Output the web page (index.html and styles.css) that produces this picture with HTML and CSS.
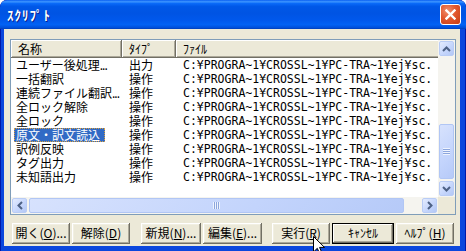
FILE: index.html
```html
<!DOCTYPE html>
<html lang="ja">
<head>
    <meta charset="UTF-8">
    <title>スクリプト</title>
    <link rel="stylesheet" href="styles.css">
</head>
<body>
    <div class="window">
        <div class="titlebar">
            <span class="title">ｽｸﾘﾌﾟﾄ</span>
            <span class="close">
                <svg width="11" height="11" viewBox="0 0 11 11"><path d="M1.5 1.5 L9.5 9.5 M9.5 1.5 L1.5 9.5" stroke="#fff" stroke-width="2.4" stroke-linecap="square"/></svg>
            </span>
        </div>
        <div class="client">
            <div class="listview">
                <div class="lv-body">
                    <div class="lv-head">
                        <div class="hcell col-name">名称</div>
                        <div class="hcell col-type">ﾀｲﾌﾟ</div>
                        <div class="hcell col-file">ﾌｧｲﾙ</div>
                    </div>
                    <div class="row"><div class="c-name"><span>ユーザー後処理<b class="dots">...</b></span></div><div class="c-type">出力</div><div class="c-file">C:¥PROGRA~1¥CROSSL~1¥PC-TRA~1¥ej¥sc.</div></div>
                    <div class="row"><div class="c-name"><span>一括翻訳</span></div><div class="c-type">操作</div><div class="c-file">C:¥PROGRA~1¥CROSSL~1¥PC-TRA~1¥ej¥sc.</div></div>
                    <div class="row"><div class="c-name"><span>連続ファイル翻訳<b class="dots">...</b></span></div><div class="c-type">操作</div><div class="c-file">C:¥PROGRA~1¥CROSSL~1¥PC-TRA~1¥ej¥sc.</div></div>
                    <div class="row"><div class="c-name"><span>全ロック解除</span></div><div class="c-type">操作</div><div class="c-file">C:¥PROGRA~1¥CROSSL~1¥PC-TRA~1¥ej¥sc.</div></div>
                    <div class="row"><div class="c-name"><span>全ロック</span></div><div class="c-type">操作</div><div class="c-file">C:¥PROGRA~1¥CROSSL~1¥PC-TRA~1¥ej¥sc.</div></div>
                    <div class="row selected"><div class="c-name"><span>原文・訳文読込</span></div><div class="c-type">操作</div><div class="c-file">C:¥PROGRA~1¥CROSSL~1¥PC-TRA~1¥ej¥sc.</div></div>
                    <div class="row"><div class="c-name"><span>訳例反映</span></div><div class="c-type">操作</div><div class="c-file">C:¥PROGRA~1¥CROSSL~1¥PC-TRA~1¥ej¥sc.</div></div>
                    <div class="row"><div class="c-name"><span>タグ出力</span></div><div class="c-type">操作</div><div class="c-file">C:¥PROGRA~1¥CROSSL~1¥PC-TRA~1¥ej¥sc.</div></div>
                    <div class="row"><div class="c-name"><span>未知語出力</span></div><div class="c-type">操作</div><div class="c-file">C:¥PROGRA~1¥CROSSL~1¥PC-TRA~1¥ej¥sc.</div></div>
                </div>

                <!-- vertical scrollbar -->
                <div class="vscroll">
                    <div class="sb-btn"><svg width="9" height="6" viewBox="0 0 9 6"><path d="M1 5 L4.5 1.5 L8 5" fill="none" stroke="#4D6185" stroke-width="2"/></svg></div>
                    <div class="vtrack"><div class="thumb vthumb"><i class="grip-h"></i></div></div>
                    <div class="sb-btn"><svg width="9" height="6" viewBox="0 0 9 6"><path d="M1 1 L4.5 4.5 L8 1" fill="none" stroke="#4D6185" stroke-width="2"/></svg></div>
                </div>

                <!-- horizontal scrollbar -->
                <div class="hscroll">
                    <div class="sb-btn"><svg width="6" height="9" viewBox="0 0 6 9"><path d="M5 1 L1.5 4.5 L5 8" fill="none" stroke="#4D6185" stroke-width="2"/></svg></div>
                    <div class="htrack"><div class="thumb hthumb"><i class="grip-v"></i></div></div>
                    <div class="sb-btn"><svg width="6" height="9" viewBox="0 0 6 9"><path d="M1 1 L4.5 4.5 L1 8" fill="none" stroke="#4D6185" stroke-width="2"/></svg></div>
                </div>
                <div class="corner"></div>
            </div>

            <div class="buttons">
                <div class="btn w58">開く(<u>O</u>)...</div>
                <div class="btn w58 ml2">解除(<u>D</u>)</div>
                <div class="btn w60 ml11">新規(<u>N</u>)...</div>
                <div class="btn w59 ml2">編集(<u>E</u>)...</div>
                <div class="btn w58 ml10">実行(<u>R</u>)</div>
                <div class="btn w62 ml2 default">ｷｬﾝｾﾙ</div>
                <div class="btn w58 ml2">ﾍﾙﾌﾟ(<u>H</u>)</div>
            </div>
        </div>

        <svg class="cursor" width="12" height="20" viewBox="0 0 12 20"><path d="M0.5 0.5 L0.5 16 L4.3 12.3 L7 18.5 L9.2 17.5 L6.6 11.4 L11.5 11.4 Z" fill="#fff" stroke="#000" stroke-width="1"/></svg>
    </div>
</body>
</html>
```

FILE: styles.css
```css
html, body {
    margin: 0;
    background: #fff;
}
body {
    width: 466px;
    height: 251px;
    overflow: hidden;
    font-family: "Noto Sans CJK JP", sans-serif;
    font-size: 12px;
    color: #000;
}
.window {
    position: relative;
    width: 466px;
    height: 251px;
    display: flex;
    flex-direction: column;
    background: #0B47DD;
    border-radius: 7px 7px 0 0;
    box-shadow: inset 1px 0 #0019A8, inset -1px 0 #0019A8;
    overflow: hidden;
}
.titlebar {
    height: 29px;
    flex: none;
    display: flex;
    align-items: center;
    padding: 0 5px 0 7px;
    background: linear-gradient(to bottom, #0A5FF2 0%, #3D95FF 6%, #0A6AF8 12%, #0058E8 22%, #0054E3 45%, #0058EC 70%, #0262F4 85%, #0050DB 95%, #003EB8 100%);
    border-radius: 7px 7px 0 0;
}
.title {
    flex: 1;
    color: #fff;
    font-weight: bold;
    font-size: 13px;
    letter-spacing: 1px;
    text-shadow: 1px 1px #0A1E8C;
}
.close {
    width: 19px;
    height: 19px;
    display: flex;
    align-items: center;
    justify-content: center;
    border: 1px solid #fff;
    border-radius: 3px;
    background: radial-gradient(circle at 35% 30%, #F09070 0%, #E2582F 45%, #C63B12 100%);
}
.client {
    flex: none;
    margin: 0 6px 0 4px;
    height: 217px;
    box-sizing: border-box;
    padding: 10px 4px 0 6px;
    background: #ECE9D8;
}

/* list view */
.listview {
    width: 446px;
    height: 176px;
    box-sizing: border-box;
    border: 1px solid #7F9DB9;
    background: #fff;
    display: grid;
    grid-template-columns: 427px 17px;
    grid-template-rows: 157px 17px;
}
.lv-body {
    overflow: hidden;
}
.lv-head {
    display: flex;
    height: 18px;
    background: #ECE9D8;
}
.hcell {
    flex: none;
    box-sizing: border-box;
    height: 18px;
    line-height: 17px;
    padding-left: 7px;
    white-space: nowrap;
    background: #ECE9D8;
    box-shadow: inset -1px -1px #716F64, inset 1px 1px #fff, inset -2px -2px #ACA899;
}
.col-name { width: 111px; }
.col-type { width: 54px; }
.col-file { width: 320px; }
.row {
    display: flex;
    height: 14px;
    line-height: 14px;
    white-space: nowrap;
}
.c-name {
    flex: none;
    width: 111px;
    box-sizing: border-box;
    padding-left: 3px;
}
.c-name span {
    display: inline-block;
    padding: 0 5px 0 2px;
}
.dots {
    font-weight: normal;
    letter-spacing: -1px;
}
.selected .c-name span {
    background: #316AC5;
    color: #fff;
    outline: 1px dotted #D8A040;
    outline-offset: -1px;
}
.c-type {
    flex: none;
    width: 54px;
    box-sizing: border-box;
    padding-left: 7px;
}
.c-file {
    flex: none;
    padding-left: 7px;
    font-family: "DejaVu Sans Mono", monospace;
    font-size: 11.5px;
}

/* scrollbars */
.vscroll, .hscroll {
    display: flex;
    background: #F5F4EF;
}
.vscroll {
    flex-direction: column;
}
.sb-btn {
    flex: none;
    width: 15px;
    height: 15px;
    margin: 1px;
    box-sizing: border-box;
    border: 1px solid #B9CCF5;
    border-radius: 2px;
    background: linear-gradient(135deg, #E4ECFE 0%, #C6D6FC 55%, #B3C8F6 100%);
    display: flex;
    align-items: center;
    justify-content: center;
}
.vtrack, .htrack {
    flex: 1;
    display: flex;
}
.vtrack {
    flex-direction: column;
    padding-top: 67px;
}
.htrack {
    padding-left: 1px;
}
.thumb {
    box-sizing: border-box;
    border: 1px solid #B1C6F4;
    border-radius: 2px;
    background: linear-gradient(135deg, #D7E2FD 0%, #C3D4FC 60%, #B6CAF8 100%);
    display: flex;
    align-items: center;
    justify-content: center;
}
.vthumb {
    width: 15px;
    height: 55px;
    margin-left: 1px;
}
.hthumb {
    width: 375px;
    height: 15px;
    margin-top: 1px;
}
.grip-h {
    width: 7px;
    height: 7px;
    background: repeating-linear-gradient(to bottom, #EEF3FE 0 1px, #8CA6DD 1px 2px);
}
.grip-v {
    width: 7px;
    height: 7px;
    background: repeating-linear-gradient(to right, #EEF3FE 0 1px, #8CA6DD 1px 2px);
}
.corner {
    background: #ECE9D8;
}

/* buttons */
.buttons {
    display: flex;
    margin-top: 8px;
    padding-left: 2px;
}
.btn {
    flex: none;
    height: 21px;
    box-sizing: border-box;
    line-height: 20px;
    text-align: center;
    white-space: nowrap;
    background: #ECE9D8;
    box-shadow: inset -1px -1px #716F64, inset 1px 1px #fff, inset -2px -2px #ACA899, inset 2px 2px #F1EFE2;
}
.btn.default {
    box-shadow: inset 0 0 0 1px #000, inset -2px -2px #716F64, inset 2px 2px #fff, inset -3px -3px #ACA899;
}
.w58 { width: 58px; }
.w59 { width: 59px; }
.w60 { width: 60px; }
.w62 { width: 62px; }
.ml2 { margin-left: 2px; }
.ml10 { margin-left: 10px; }
.ml11 { margin-left: 11px; }

.cursor {
    position: absolute;
    left: 313px;
    top: 236px;
}
```
